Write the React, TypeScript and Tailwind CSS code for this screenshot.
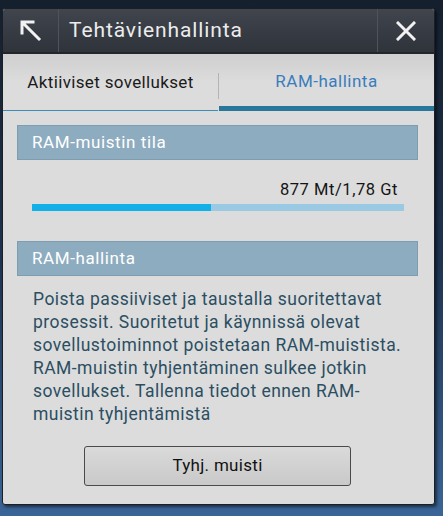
const ArrowUpLeft = () => (
  <svg width="22" height="22" viewBox="0 0 22 22" fill="none" stroke="#f2f2f2" strokeWidth="3" strokeLinecap="square">
    <path d="M3 3 L19 19 M2 2 H13 M2 2 V13" />
  </svg>
);

const CloseX = () => (
  <svg width="20" height="20" viewBox="0 0 20 20" fill="none" stroke="#f2f2f2" strokeWidth="3" strokeLinecap="square">
    <path d="M2 2 L18 18 M18 2 L2 18" />
  </svg>
);

const SectionHeader = ({ title }: { title: string }) => (
  <div className="mx-[14px] w-[401px] h-[35px] flex items-center pl-[14px] bg-[#8eacbf] border border-[#7f9db0] text-white text-[17px] tracking-[0.6px]">
    {title}
  </div>
);

const lines = [
  "Poista passiiviset ja taustalla suoritettavat",
  "prosessit. Suoritetut ja käynnissä olevat",
  "sovellustoiminnot poistetaan RAM-muistista.",
  "RAM-muistin tyhjentäminen sulkee jotkin",
  "sovellukset. Tallenna tiedot ennen RAM-",
  "muistin tyhjentämistä",
];

const App = () => {
  return (
    <div
      className="w-[443px] h-[516px] pt-[8px] pl-[2px] overflow-hidden bg-gradient-to-b from-[#15202e] via-[#1d3350] to-[#3a6596]"
      style={{ fontFamily: "Roboto, 'Noto Sans', sans-serif" }}
    >
      <div className="w-[433px] h-[497px] flex flex-col border border-[#1c1f24] rounded-[3px] bg-[#dcdcdc] shadow-[2px_2px_3px_rgba(0,0,0,0.5)]">
        {/* title bar */}
        <div className="h-[45px] flex items-stretch bg-gradient-to-b from-[#40454e] to-[#2f343b] border-b-2 border-[#22262b] rounded-t-[2px]">
          <div className="w-[56px] flex items-center justify-center border-r border-[#4f545c]">
            <ArrowUpLeft />
          </div>
          <div className="flex-1 flex items-center pl-[10px] pt-[1px] text-[21px] tracking-[0.9px] text-[#ececec]">
            Tehtävienhallinta
          </div>
          <div className="w-[57px] flex items-center justify-center border-l border-[#4f545c]">
            <CloseX />
          </div>
        </div>

        {/* tabs */}
        <div className="h-[57px] flex bg-gradient-to-b from-[#cfcfcf] via-[#dcdcdc] to-[#dcdcdc]">
          <div className="w-[215px] flex items-center justify-center border-b border-[#3d8cb8] text-[17px] tracking-[0.35px] text-[#1a1a1a] pt-[2px]">
            Aktiiviset sovellukset
          </div>
          <div className="w-px h-[26px] mt-[19px] bg-[#b4b4b4]" />
          <div className="flex-1 flex items-center justify-center border-b-[5px] border-[#2a7899] text-[17px] tracking-[0.5px] text-[#3a7cbd] pt-[4px]">
            RAM-hallinta
          </div>
        </div>

        {/* memory status */}
        <div className="mt-[14px]">
          <SectionHeader title="RAM-muistin tila" />
        </div>
        <div className="ml-[29px] w-[372px] mt-[20px] flex flex-col">
          <div className="text-right pr-[6px] text-[16.5px] tracking-[0.55px] leading-[20px] text-[#141414]">
            877 Mt/1,78 Gt
          </div>
          <div className="mt-[4px] h-[7px] flex bg-[#9ac9e4]">
            <div className="w-[179px] bg-[#12b0e9]" />
          </div>
        </div>

        {/* RAM management */}
        <div className="mt-[30px]">
          <SectionHeader title="RAM-hallinta" />
        </div>
        <p className="ml-[30px] w-[380px] mt-[12px] whitespace-nowrap text-[17.5px] tracking-[0.45px] leading-[23px] text-[#2b4e62]">
          {lines.map((line, i) => (
            <span key={i}>
              {line}
              {i < lines.length - 1 && <br />}
            </span>
          ))}
        </p>
        <div className="mt-[20px] flex justify-center pr-[2px]">
          <button className="w-[267px] h-[40px] rounded-[3px] border border-[#4a4a4a] bg-gradient-to-b from-[#dadada] to-[#c9c9c9] text-[17px] tracking-[0.3px] text-[#111]">
            Tyhj. muisti
          </button>
        </div>
      </div>
    </div>
  );
};

export default App;
